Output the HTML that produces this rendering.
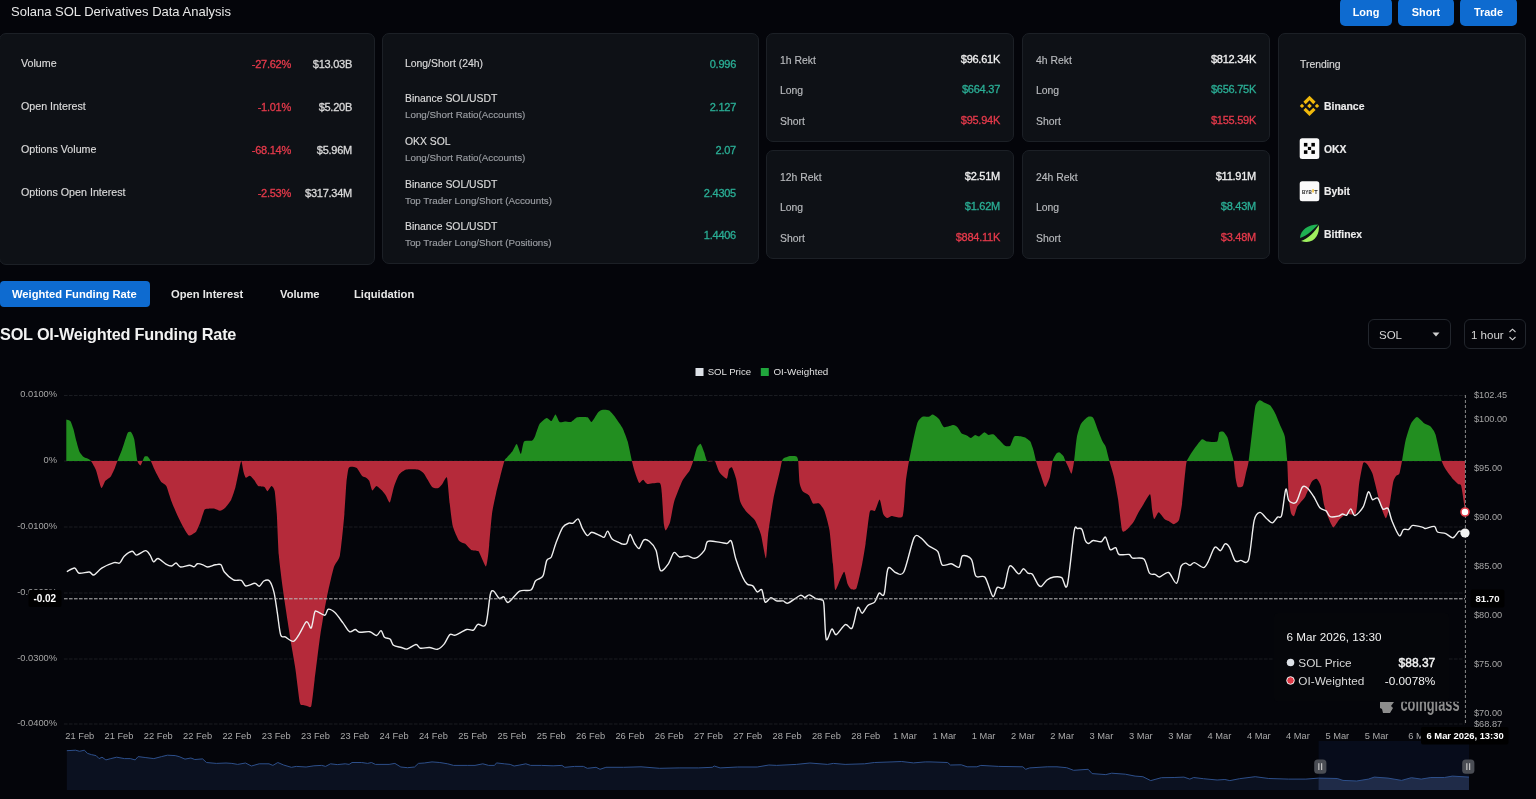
<!DOCTYPE html>
<html><head><meta charset="utf-8">
<style>
html,body{margin:0;padding:0;}
body{width:1536px;height:799px;overflow:hidden;will-change:transform;background:#04050a;font-family:"Liberation Sans",sans-serif;color:#e4e4e4;position:relative;}
.a{position:absolute;white-space:nowrap;}
.card{position:absolute;background:#0e1116;border:1px solid #1c2026;border-radius:7px;box-sizing:border-box;}
.lbl{position:absolute;white-space:nowrap;font-size:10.4px;line-height:10px;color:#dadada;-webkit-text-stroke:0.15px currentColor;}
.tx{font-size:10.7px;}
.num{font-size:11px;letter-spacing:-0.25px;-webkit-text-stroke:0.3px currentColor;}
.r{text-align:right;}
.red{color:#e63a4b;}
.grn{color:#2aae95;}
.sub{color:#9b9ea3;font-size:9.8px;}
.btn{position:absolute;top:-2px;height:27.6px;background:#0e6bd0;border-radius:5px;color:#fff;font-weight:700;font-size:10.9px;line-height:29px;text-align:center;}
.tab{position:absolute;top:294px;font-size:11.2px;font-weight:700;line-height:0;color:#e8e8e8;}
svg text{font-family:"Liberation Sans",sans-serif;}
</style></head><body>
<div class="a" style="left:11px;top:5px;font-size:13px;line-height:13px;color:#e8e8e8;">Solana SOL Derivatives Data Analysis</div>

<div class="btn" style="left:1340px;width:52px;">Long</div>
<div class="btn" style="left:1398px;width:56px;">Short</div>
<div class="btn" style="left:1460px;width:57px;">Trade</div>

<!-- card 1 -->
<div class="card" style="left:-1px;top:33px;width:376px;height:232px;"></div>
<div class="lbl tx" style="left:21px;top:58.3px;">Volume</div>
<div class="lbl tx" style="left:21px;top:101.3px;">Open Interest</div>
<div class="lbl tx" style="left:21px;top:144.3px;">Options Volume</div>
<div class="lbl tx" style="left:21px;top:187.3px;">Options Open Interest</div>
<div class="lbl red r num" style="right:1245px;top:58.7px;">-27.62%</div>
<div class="lbl red r num" style="right:1245px;top:101.7px;">-1.01%</div>
<div class="lbl red r num" style="right:1245px;top:144.7px;">-68.14%</div>
<div class="lbl red r num" style="right:1245px;top:187.7px;">-2.53%</div>
<div class="lbl r num" style="right:1184px;top:58.7px;">$13.03B</div>
<div class="lbl r num" style="right:1184px;top:101.7px;">$5.20B</div>
<div class="lbl r num" style="right:1184px;top:144.7px;">$5.96M</div>
<div class="lbl r num" style="right:1184px;top:187.7px;">$317.34M</div>

<!-- card 2 -->
<div class="card" style="left:382px;top:33px;width:377px;height:231px;"></div>
<div class="lbl" style="left:405px;top:58.5px;">Long/Short (24h)</div>
<div class="lbl" style="left:405px;top:93.5px;">Binance SOL/USDT</div>
<div class="lbl sub" style="left:405px;top:109.5px;">Long/Short Ratio(Accounts)</div>
<div class="lbl" style="left:405px;top:136.5px;">OKX SOL</div>
<div class="lbl sub" style="left:405px;top:152.5px;">Long/Short Ratio(Accounts)</div>
<div class="lbl" style="left:405px;top:179.5px;">Binance SOL/USDT</div>
<div class="lbl sub" style="left:405px;top:195.5px;">Top Trader Long/Short (Accounts)</div>
<div class="lbl" style="left:405px;top:221.5px;">Binance SOL/USDT</div>
<div class="lbl sub" style="left:405px;top:237.5px;">Top Trader Long/Short (Positions)</div>
<div class="lbl grn r num" style="right:800px;top:58.9px;">0.996</div>
<div class="lbl grn r num" style="right:800px;top:101.9px;">2.127</div>
<div class="lbl grn r num" style="right:800px;top:144.9px;">2.07</div>
<div class="lbl grn r num" style="right:800px;top:187.9px;">2.4305</div>
<div class="lbl grn r num" style="right:800px;top:229.9px;">1.4406</div>

<!-- rekt cards -->
<div class="card" style="left:766px;top:33px;width:248px;height:109px;"></div>
<div class="card" style="left:1022px;top:33px;width:248px;height:109px;"></div>
<div class="card" style="left:766px;top:150px;width:248px;height:109px;"></div>
<div class="card" style="left:1022px;top:150px;width:248px;height:109px;"></div>
<div class="lbl" style="left:780px;top:55.5px;color:#b9bbbe;">1h Rekt</div>
<div class="lbl" style="left:780px;top:85.5px;color:#b9bbbe;">Long</div>
<div class="lbl" style="left:780px;top:116.5px;color:#b9bbbe;">Short</div>
<div class="lbl r num" style="right:536px;top:53.9px;color:#f0f0f0;">$96.61K</div>
<div class="lbl grn r num" style="right:536px;top:83.9px;">$664.37</div>
<div class="lbl red r num" style="right:536px;top:114.9px;">$95.94K</div>
<div class="lbl" style="left:1036px;top:55.5px;color:#b9bbbe;">4h Rekt</div>
<div class="lbl" style="left:1036px;top:85.5px;color:#b9bbbe;">Long</div>
<div class="lbl" style="left:1036px;top:116.5px;color:#b9bbbe;">Short</div>
<div class="lbl r num" style="right:280px;top:53.9px;color:#f0f0f0;">$812.34K</div>
<div class="lbl grn r num" style="right:280px;top:83.9px;">$656.75K</div>
<div class="lbl red r num" style="right:280px;top:114.9px;">$155.59K</div>
<div class="lbl" style="left:780px;top:172.5px;color:#b9bbbe;">12h Rekt</div>
<div class="lbl" style="left:780px;top:202.5px;color:#b9bbbe;">Long</div>
<div class="lbl" style="left:780px;top:233.5px;color:#b9bbbe;">Short</div>
<div class="lbl r num" style="right:536px;top:170.9px;color:#f0f0f0;">$2.51M</div>
<div class="lbl grn r num" style="right:536px;top:200.9px;">$1.62M</div>
<div class="lbl red r num" style="right:536px;top:231.9px;">$884.11K</div>
<div class="lbl" style="left:1036px;top:172.5px;color:#b9bbbe;">24h Rekt</div>
<div class="lbl" style="left:1036px;top:202.5px;color:#b9bbbe;">Long</div>
<div class="lbl" style="left:1036px;top:233.5px;color:#b9bbbe;">Short</div>
<div class="lbl r num" style="right:280px;top:170.9px;color:#f0f0f0;">$11.91M</div>
<div class="lbl grn r num" style="right:280px;top:200.9px;">$8.43M</div>
<div class="lbl red r num" style="right:280px;top:231.9px;">$3.48M</div>

<!-- trending -->
<div class="card" style="left:1278px;top:33px;width:248px;height:231px;"></div>
<div class="lbl" style="left:1300px;top:59.5px;color:#d8d8d8;">Trending</div>

<svg class="a" style="left:1296px;top:92px" width="28" height="28" viewBox="0 0 28 28">
<g fill="#f0b90b">
<path d="M13.5,3.7 L19.6,9.8 L17.27,12.13 L13.5,8.36 L9.73,12.13 L7.4,9.8 Z"/>
<path d="M13.5,24.1 L19.6,18 L17.27,15.67 L13.5,19.44 L9.73,15.67 L7.4,18 Z"/>
<path d="M13.5,11.6 L15.8,13.9 L13.5,16.2 L11.2,13.9 Z"/>
<path d="M6,11.7 L8.2,13.9 L6,16.1 L3.8,13.9 Z"/>
<path d="M21,11.7 L23.2,13.9 L21,16.1 L18.8,13.9 Z"/>
</g>
</svg>
<svg class="a" style="left:1296px;top:135px" width="28" height="28" viewBox="0 0 28 28">
<rect x="3.7" y="3.2" width="19.6" height="20.7" rx="2.5" fill="#fafafa"/>
<g fill="#000"><rect x="7.9" y="7.9" width="3.5" height="3.6"/><rect x="15.4" y="7.9" width="3.5" height="3.6"/><rect x="11.9" y="11.9" width="3.2" height="3.1"/><rect x="7.9" y="15.3" width="3.5" height="3.6"/><rect x="15.4" y="15.3" width="3.5" height="3.6"/></g>
</svg>
<svg class="a" style="left:1296px;top:178px" width="28" height="28" viewBox="0 0 28 28">
<rect x="3.7" y="3.2" width="19.6" height="20.1" rx="2.5" fill="#fafafa"/>
<text x="6" y="16" font-size="5.6" font-weight="700" fill="#1a1a1a" textLength="9.8" lengthAdjust="spacingAndGlyphs" font-family="Liberation Sans">BYB</text><text x="18.2" y="16" font-size="5.6" font-weight="700" fill="#1a1a1a" font-family="Liberation Sans">T</text>
<rect x="16.4" y="11.2" width="1.3" height="3.2" fill="#f7b500"/>
</svg>
<svg class="a" style="left:1296px;top:220px" width="28" height="28" viewBox="0 0 28 28">
<path d="M4,18 C4.5,10 12,4.5 22.2,4.6 C17,10 11,16 4,18 Z" fill="#1fb152"/>
<path d="M5,21 C12,18.5 19,12 22.8,5 C24,15 18,25 5,21 Z" fill="#9ef05e"/>
</svg>

<div class="lbl" style="left:1324px;top:101.9px;font-weight:700;color:#ececec;">Binance</div>
<div class="lbl" style="left:1324px;top:144.9px;font-weight:700;color:#ececec;">OKX</div>
<div class="lbl" style="left:1324px;top:186.9px;font-weight:700;color:#ececec;">Bybit</div>
<div class="lbl" style="left:1324px;top:229.9px;font-weight:700;color:#ececec;">Bitfinex</div>

<!-- tabs -->
<div class="a" style="left:0;top:281px;width:150px;height:26px;background:#0e6bd0;border-radius:4px;"></div>
<div class="tab" style="left:12px;color:#fff;">Weighted Funding Rate</div>
<div class="tab" style="left:171px;">Open Interest</div>
<div class="tab" style="left:280px;">Volume</div>
<div class="tab" style="left:354px;">Liquidation</div>

<div class="a" style="left:0;top:326px;font-size:16.3px;line-height:17px;font-weight:700;color:#f2f2f2;letter-spacing:-0.2px;">SOL OI-Weighted Funding Rate</div>

<div class="a" style="left:1368px;top:319px;width:83px;height:30px;border:1px solid #22262d;border-radius:6px;box-sizing:border-box;"></div>
<div class="a" style="left:1379px;top:329px;font-size:11.5px;line-height:12px;color:#d6d6d6;">SOL</div>
<svg class="a" style="left:1432px;top:332px" width="8" height="5"><path d="M0.5,0.5 L7.5,0.5 L4,4.5 Z" fill="#cfcfcf"/></svg>
<div class="a" style="left:1464px;top:319px;width:62px;height:30px;border:1px solid #22262d;border-radius:6px;box-sizing:border-box;"></div>
<div class="a" style="left:1471px;top:329px;font-size:11.5px;line-height:12px;color:#d6d6d6;">1 hour</div>
<svg class="a" style="left:1508px;top:328px" width="9" height="13"><path d="M1.5,4 L4.5,1.2 L7.5,4 M1.5,9 L4.5,11.8 L7.5,9" fill="none" stroke="#cfcfcf" stroke-width="1.1"/></svg>


<svg class="a" style="left:0;top:0" width="1536" height="799" viewBox="0 0 1536 799">
<defs>
<clipPath id="cg"><rect x="0" y="0" width="1536" height="461"/></clipPath>
<clipPath id="cr"><rect x="0" y="461" width="1536" height="400"/></clipPath>
<clipPath id="wm"><rect x="1370" y="701.8" width="100" height="20"/></clipPath>
<linearGradient id="tt" x1="0" y1="0" x2="1" y2="1"><stop offset="0" stop-color="#0a0b11"/><stop offset="1" stop-color="#07080d"/></linearGradient>
</defs>
<!-- legend -->
<rect x="695.5" y="368" width="8" height="8" fill="#dde1e7"/>
<text x="707.7" y="375.3" font-size="9.6" fill="#e0e0e0">SOL Price</text>
<rect x="760.8" y="368" width="8" height="8" fill="#20a63c"/>
<text x="773.5" y="375.3" font-size="9.8" fill="#e0e0e0">OI-Weighted</text>
<!-- grid -->
<g stroke="#1a1c21" stroke-width="1" stroke-dasharray="3.6,1.4">
<line x1="64" y1="395.5" x2="1465" y2="395.5"/>
<line x1="64" y1="461" x2="1465" y2="461"/>
<line x1="64" y1="527" x2="1465" y2="527"/>
<line x1="64" y1="593" x2="1465" y2="593"/>
<line x1="64" y1="659" x2="1465" y2="659"/>
<line x1="64" y1="724" x2="1465" y2="724"/>
</g>
<g font-size="9.3" fill="#a6a6a6" text-anchor="end">
<text x="57" y="397.3">0.0100%</text>
<text x="57" y="463.3">0%</text>
<text x="57" y="529.3">-0.0100%</text>
<text x="57" y="594.8">-0.0200%</text>
<text x="57" y="660.8">-0.0300%</text>
<text x="57" y="726.3">-0.0400%</text>
</g>
<g font-size="9.2" fill="#a6a6a6">
<text x="1474" y="398">$102.45</text>
<text x="1474" y="422">$100.00</text>
<text x="1474" y="471">$95.00</text>
<text x="1474" y="520">$90.00</text>
<text x="1474" y="569">$85.00</text>
<text x="1474" y="618">$80.00</text>
<text x="1474" y="667">$75.00</text>
<text x="1474" y="716">$70.00</text>
<text x="1474" y="727">$68.87</text>
</g>
<!-- funding area -->
<path d="M66.3,461 L66.3,419.5 L66.3,419.5 C66.7,419.6 69.6,420.1 70.3,421.0 C71.0,421.9 72.8,426.9 73.4,429.0 C74.0,431.1 75.9,439.3 76.5,441.6 C77.1,443.9 78.9,450.5 79.6,452.0 C80.3,453.5 82.9,456.3 83.7,457.0 C84.5,457.7 87.2,458.3 87.9,458.7 C88.6,459.1 90.2,459.8 91.0,461.0 C91.8,462.2 95.1,467.8 96.1,470.5 C97.1,473.2 100.4,487.0 101.3,488.0 C102.2,489.0 104.5,481.9 105.4,480.8 C106.3,479.7 109.7,477.9 110.6,476.7 C111.5,475.5 114.0,470.0 114.7,468.4 C115.4,466.8 116.7,462.9 117.4,461.0 C118.1,459.1 121.0,452.2 121.9,449.9 C122.8,447.5 125.4,439.3 126.0,437.5 C126.6,435.7 127.6,432.8 128.1,432.3 C128.6,431.8 130.6,431.6 131.2,432.3 C131.8,433.0 133.7,436.6 134.3,439.5 C134.9,442.4 136.8,458.4 137.4,461.0 C138.0,463.6 140.0,465.4 140.5,465.4 C141.0,465.4 142.2,461.9 142.6,461.0 C143.0,460.1 144.1,456.9 144.6,456.5 C145.1,456.1 147.1,456.1 147.7,456.5 C148.3,456.9 150.2,459.8 150.8,461.0 C151.4,462.2 153.4,467.0 154.0,468.4 C154.6,469.8 156.3,473.2 157.0,474.6 C157.7,476.0 160.3,480.8 161.2,481.9 C162.1,483.0 165.3,484.0 166.3,486.0 C167.3,488.0 170.4,498.5 171.5,501.5 C172.6,504.5 176.5,513.3 177.7,516.0 C178.9,518.7 182.8,526.3 183.9,528.3 C185.0,530.2 187.8,535.2 189.0,535.5 C190.2,535.8 195.2,532.7 196.3,531.4 C197.4,530.1 199.6,524.3 200.4,522.1 C201.2,519.9 203.7,511.0 204.5,509.7 C205.3,508.4 207.6,508.8 208.6,508.7 C209.6,508.6 213.7,508.5 214.8,508.7 C215.9,508.9 219.0,510.9 220.0,510.8 C221.0,510.7 224.1,508.8 225.2,507.7 C226.3,506.6 230.3,501.5 231.3,499.4 C232.3,497.3 234.8,489.7 235.5,487.0 C236.2,484.3 238.0,475.2 238.6,472.6 C239.2,470.0 240.8,461.0 241.3,461.0 C241.8,461.0 243.2,470.9 243.7,472.6 C244.1,474.3 245.2,477.4 245.8,477.7 C246.4,478.0 249.1,475.5 249.9,475.7 C250.7,475.9 253.2,478.8 254.0,479.8 C254.8,480.8 257.2,485.3 258.2,486.0 C259.2,486.7 263.5,486.5 264.4,487.0 C265.3,487.5 266.8,491.3 267.5,491.2 C268.2,491.1 270.9,486.0 271.6,486.0 C272.3,486.0 274.2,488.4 274.7,491.2 C275.2,494.0 276.4,507.5 276.8,513.9 C277.2,520.3 278.2,547.4 278.8,555.0 C279.4,562.6 281.9,582.0 283.0,590.0 C284.1,598.0 288.5,627.1 289.7,635.0 C290.9,642.9 294.4,662.1 295.4,668.9 C296.4,675.7 299.1,699.1 299.9,702.7 C300.7,706.3 302.5,704.7 303.2,705.0 C303.9,705.3 306.2,705.9 307.0,706.0 C307.8,706.1 310.5,708.6 311.3,706.0 C312.1,703.4 313.7,687.1 314.6,680.0 C315.5,672.9 319.1,643.3 320.3,635.0 C321.5,626.7 325.6,603.5 327.0,596.8 C328.4,590.0 332.5,571.7 333.8,567.5 C335.1,563.3 338.9,560.4 340.0,555.0 C341.1,549.6 343.8,521.1 344.4,513.9 C345.0,506.7 346.0,487.4 346.4,482.9 C346.8,478.3 348.0,470.0 348.5,468.4 C349.0,466.8 350.8,466.8 351.6,466.8 C352.4,466.8 355.8,467.1 356.8,468.0 C357.8,468.9 361.0,474.7 361.9,475.7 C362.8,476.7 365.4,477.2 366.1,477.7 C366.8,478.2 368.6,479.5 369.2,480.8 C369.8,482.1 371.6,490.0 372.3,490.5 C373.0,491.0 375.5,486.0 376.4,486.0 C377.3,486.0 380.6,489.2 381.5,490.1 C382.4,491.0 384.9,494.1 385.7,495.3 C386.5,496.5 389.0,503.3 389.8,502.5 C390.6,501.7 393.0,489.8 393.9,487.0 C394.8,484.2 397.9,476.4 399.1,474.6 C400.3,472.9 404.4,470.0 406.3,469.5 C408.2,469.0 415.9,469.1 417.7,469.5 C419.5,469.9 422.5,471.9 423.9,473.6 C425.3,475.4 430.7,485.6 432.1,487.0 C433.5,488.4 437.3,488.3 438.3,488.0 C439.3,487.7 441.5,484.9 442.4,483.9 C443.3,482.9 446.3,475.7 447.0,477.7 C447.7,479.7 449.1,498.6 449.7,503.5 C450.3,508.4 451.9,522.6 452.8,526.3 C453.7,530.0 457.8,539.0 459.0,540.7 C460.2,542.5 464.0,542.9 465.2,543.8 C466.4,544.7 470.1,549.3 471.3,550.0 C472.5,550.7 476.7,550.8 477.5,551.0 C478.3,551.2 478.2,550.5 479.0,552.0 C479.8,553.5 484.9,566.0 485.8,566.4 C486.7,566.8 487.7,558.4 488.0,556.3 C488.3,554.2 488.8,549.2 489.2,545.0 C489.6,540.8 491.3,519.1 492.0,513.9 C492.7,508.7 495.3,496.9 496.1,493.2 C496.9,489.5 499.4,479.9 500.2,476.7 C501.0,473.5 503.8,462.9 504.4,461.0 C505.0,459.1 505.6,459.1 506.4,458.1 C507.2,457.1 511.6,452.3 512.6,450.9 C513.6,449.5 516.0,443.8 516.8,444.1 C517.6,444.4 520.2,454.2 520.9,454.0 C521.6,453.8 522.9,442.9 524.0,441.6 C525.1,440.3 531.1,441.2 532.2,440.6 C533.3,440.0 534.6,437.0 535.3,435.4 C536.0,433.8 538.4,425.8 539.5,424.1 C540.6,422.4 545.5,418.3 546.7,418.0 C547.9,417.7 550.5,421.4 551.4,421.0 C552.3,420.6 554.7,414.3 555.5,414.4 C556.3,414.5 558.7,421.3 559.6,422.0 C560.5,422.7 563.7,421.4 564.8,421.4 C565.9,421.4 569.8,422.4 571.0,422.0 C572.2,421.6 575.6,417.8 577.2,417.3 C578.9,416.8 586.1,416.8 587.5,417.3 C588.9,417.8 590.6,422.5 591.6,422.0 C592.6,421.5 596.8,413.9 597.8,412.7 C598.8,411.5 600.8,410.2 601.9,410.0 C603.0,409.8 607.8,409.7 609.2,410.6 C610.7,411.5 615.1,417.1 616.4,418.9 C617.7,420.7 621.5,425.9 622.6,428.2 C623.7,430.5 626.8,438.3 627.7,441.6 C628.6,444.9 631.2,457.9 631.9,461.0 C632.6,464.1 634.3,470.4 635.0,472.6 C635.7,474.8 638.3,482.2 639.1,482.9 C639.9,483.6 642.4,479.7 643.2,479.8 C644.0,479.9 645.6,483.6 647.3,483.9 C648.9,484.2 658.2,482.0 659.7,482.9 C661.2,483.8 661.4,489.1 661.8,493.2 C662.2,497.3 663.5,520.5 663.9,524.2 C664.3,527.9 665.3,530.6 665.9,530.4 C666.5,530.2 669.3,525.0 670.1,522.1 C670.9,519.2 673.0,505.6 674.2,501.5 C675.4,497.4 680.9,483.9 682.4,480.8 C683.9,477.7 688.6,472.5 689.7,470.5 C690.8,468.5 692.5,463.3 693.2,461.0 C693.9,458.7 696.2,449.5 696.9,447.8 C697.6,446.1 699.9,443.3 700.6,443.7 C701.3,444.1 703.4,450.2 704.1,451.9 C704.8,453.6 706.2,460.1 707.2,461.0 C708.2,461.9 713.6,460.9 714.4,461.0 C715.2,461.1 715.0,461.1 715.5,462.3 C716.0,463.5 718.5,471.0 719.6,472.6 C720.7,474.2 725.9,479.1 726.8,478.8 C727.7,478.5 728.4,470.6 728.9,469.5 C729.4,468.4 731.3,466.5 732.0,467.4 C732.7,468.3 735.3,475.4 736.1,478.8 C736.9,482.2 739.2,498.2 740.2,501.5 C741.2,504.8 744.9,509.9 746.4,511.8 C747.9,513.7 753.2,517.8 754.7,520.1 C756.2,522.4 759.8,530.7 760.9,534.5 C762.0,538.3 765.2,558.2 765.9,558.2 C766.6,558.2 767.4,540.4 768.1,534.5 C768.8,528.6 772.2,505.6 773.3,499.4 C774.4,493.2 778.6,476.4 779.5,472.6 C780.4,468.8 781.5,462.4 782.0,461.0 C782.5,459.6 783.3,458.6 784.1,458.1 C784.9,457.6 789.1,456.3 790.3,456.1 C791.5,455.9 795.7,456.0 796.5,456.5 C797.3,457.0 797.9,458.4 798.2,461.0 C798.5,463.6 799.1,479.9 799.6,482.9 C800.1,485.9 801.8,490.0 802.7,491.2 C803.6,492.4 807.9,494.1 808.9,495.3 C809.9,496.5 812.0,502.7 813.0,503.5 C814.0,504.3 818.1,502.8 819.2,503.5 C820.3,504.2 823.4,508.1 824.4,510.8 C825.4,513.5 828.6,525.1 829.5,530.4 C830.4,535.7 832.3,557.9 832.9,563.8 C833.5,569.7 834.5,588.0 835.2,589.7 C835.9,591.4 838.8,582.5 839.7,580.7 C840.6,578.9 843.4,571.4 844.2,571.7 C845.0,572.0 846.9,582.4 847.6,584.1 C848.3,585.8 850.0,588.6 850.9,589.0 C851.8,589.4 855.5,590.6 856.6,588.1 C857.7,585.6 861.3,568.3 862.2,563.8 C863.1,559.3 864.8,548.7 865.6,543.5 C866.4,538.3 868.9,515.1 869.8,511.8 C870.7,508.5 874.0,512.0 875.0,510.8 C876.0,509.6 878.9,499.1 879.7,499.4 C880.5,499.7 882.4,512.0 883.2,513.9 C884.0,515.8 886.5,517.8 887.3,518.0 C888.1,518.2 890.0,516.1 891.5,515.9 C893.0,515.7 901.4,519.4 902.8,515.9 C904.2,512.4 905.3,486.3 905.9,480.8 C906.5,475.3 908.4,464.5 909.0,461.0 C909.6,457.5 911.3,449.5 912.1,445.7 C912.9,441.9 916.3,425.9 917.3,423.0 C918.3,420.1 921.3,417.4 922.4,416.8 C923.5,416.2 927.6,417.0 928.6,416.8 C929.6,416.6 931.8,414.2 932.8,414.4 C933.8,414.6 937.9,417.6 939.0,418.9 C940.1,420.2 942.7,426.6 944.1,427.2 C945.5,427.8 952.1,425.1 953.4,425.1 C954.7,425.1 956.7,426.4 957.5,427.2 C958.3,428.0 960.8,432.6 961.7,433.4 C962.6,434.2 965.9,434.9 966.8,435.4 C967.7,435.8 970.2,437.9 971.0,437.9 C971.8,437.9 974.3,435.1 975.1,435.0 C975.9,434.9 978.3,436.7 979.2,436.4 C980.1,436.1 983.5,432.4 984.4,432.3 C985.3,432.2 987.6,434.8 988.5,435.0 C989.4,435.2 992.7,433.9 993.7,434.4 C994.7,434.8 997.7,438.4 998.8,439.5 C999.9,440.6 1003.9,445.1 1005.0,445.7 C1006.1,446.3 1009.3,446.6 1010.2,445.7 C1011.1,444.8 1013.2,437.3 1014.3,436.4 C1015.4,435.5 1020.4,436.3 1021.5,436.4 C1022.6,436.5 1024.3,437.0 1025.2,437.5 C1026.1,438.0 1029.5,440.4 1030.3,441.6 C1031.1,442.8 1032.8,448.0 1033.4,449.9 C1034.0,451.8 1035.4,458.5 1036.1,461.0 C1036.8,463.5 1039.7,472.0 1040.6,474.6 C1041.5,477.2 1044.3,486.8 1045.2,487.0 C1046.1,487.2 1049.2,479.3 1049.9,476.7 C1050.6,474.1 1052.0,463.3 1052.6,461.0 C1053.2,458.7 1055.4,454.9 1056.1,454.0 C1056.8,453.1 1058.5,452.1 1059.2,452.3 C1059.9,452.5 1062.8,455.2 1063.4,456.1 C1064.0,457.0 1064.9,459.9 1065.4,461.0 C1065.9,462.1 1067.9,466.1 1068.5,467.4 C1069.1,468.7 1071.0,474.2 1071.6,473.6 C1072.2,473.0 1073.6,464.6 1074.1,461.0 C1074.6,457.4 1076.1,441.2 1076.8,437.5 C1077.5,433.8 1079.8,426.2 1080.9,424.1 C1082.0,422.0 1086.9,417.4 1088.1,416.8 C1089.3,416.2 1092.3,416.4 1093.3,417.9 C1094.3,419.3 1097.5,428.9 1098.4,431.3 C1099.3,433.7 1101.9,440.1 1102.6,441.6 C1103.3,443.2 1105.0,444.9 1105.7,446.8 C1106.4,448.7 1108.6,458.0 1109.4,461.0 C1110.2,464.0 1113.0,472.9 1113.9,476.7 C1114.8,480.5 1117.3,494.0 1118.1,499.4 C1118.9,504.8 1121.3,527.4 1122.2,530.4 C1123.1,533.4 1126.2,530.1 1127.3,529.3 C1128.4,528.5 1132.5,523.6 1133.5,522.1 C1134.5,520.6 1136.7,515.8 1137.7,513.9 C1138.7,512.0 1142.7,505.5 1143.9,503.5 C1145.1,501.5 1149.3,493.7 1150.1,494.3 C1150.9,494.9 1151.7,507.2 1152.1,509.7 C1152.5,512.2 1153.5,518.8 1154.2,519.0 C1154.9,519.2 1157.7,512.2 1158.7,512.2 C1159.7,512.2 1163.5,518.1 1164.5,519.0 C1165.5,519.9 1167.7,520.6 1168.6,521.1 C1169.5,521.6 1172.8,524.3 1173.8,524.2 C1174.8,524.1 1178.2,522.2 1179.0,520.1 C1179.8,518.0 1181.5,508.2 1182.1,503.5 C1182.7,498.8 1184.7,476.9 1185.2,472.6 C1185.7,468.4 1186.0,463.3 1186.8,461.0 C1187.6,458.7 1191.9,452.0 1193.4,449.9 C1194.9,447.8 1200.4,440.3 1201.7,439.5 C1203.0,438.7 1205.3,441.4 1206.8,441.6 C1208.3,441.8 1215.9,442.5 1217.1,441.6 C1218.3,440.7 1218.6,433.3 1219.2,432.3 C1219.8,431.3 1222.5,431.2 1223.3,431.7 C1224.1,432.2 1226.8,435.7 1227.5,437.5 C1228.2,439.3 1230.0,447.5 1230.6,449.9 C1231.2,452.2 1233.2,458.1 1233.7,461.0 C1234.2,463.9 1235.3,476.2 1235.7,478.8 C1236.1,481.4 1237.1,486.3 1237.8,487.0 C1238.5,487.7 1242.2,487.4 1243.0,486.0 C1243.8,484.6 1245.5,475.1 1246.1,472.6 C1246.7,470.1 1248.1,465.1 1248.7,461.0 C1249.3,456.9 1251.5,436.8 1252.2,431.3 C1252.9,425.9 1254.6,409.6 1255.3,406.5 C1256.0,403.4 1258.6,400.7 1259.5,400.3 C1260.4,399.9 1263.5,402.3 1264.6,402.8 C1265.7,403.3 1269.2,404.5 1270.3,405.6 C1271.4,406.7 1274.5,411.8 1275.5,413.9 C1276.5,416.0 1279.7,424.0 1280.6,426.3 C1281.5,428.6 1284.1,433.1 1284.8,436.6 C1285.5,440.1 1286.8,454.8 1287.2,461.0 C1287.6,467.2 1288.5,493.3 1288.9,498.5 C1289.3,503.7 1290.5,511.2 1291.0,513.0 C1291.5,514.8 1293.5,516.7 1294.1,516.1 C1294.7,515.5 1296.6,508.1 1297.2,506.8 C1297.8,505.5 1299.5,503.7 1300.3,502.7 C1301.1,501.7 1304.3,498.6 1305.4,496.5 C1306.5,494.4 1310.5,483.8 1311.6,482.0 C1312.7,480.2 1315.9,478.5 1316.8,478.9 C1317.7,479.3 1320.2,483.6 1320.9,486.2 C1321.6,488.8 1323.3,501.6 1324.0,504.7 C1324.7,507.8 1327.2,514.8 1328.1,517.1 C1329.0,519.4 1332.2,527.2 1333.3,527.4 C1334.4,527.6 1338.2,520.5 1339.5,519.2 C1340.8,517.9 1345.0,514.6 1346.7,514.0 C1348.4,513.4 1354.8,516.0 1356.0,513.0 C1357.2,510.0 1358.4,489.1 1359.1,484.1 C1359.8,479.1 1362.4,465.0 1363.2,463.0 C1364.0,461.0 1366.4,463.4 1367.3,464.5 C1368.2,465.6 1371.5,470.8 1372.5,473.8 C1373.5,476.8 1376.8,490.9 1377.7,494.4 C1378.6,497.9 1381.0,506.5 1381.8,508.9 C1382.6,511.3 1385.2,518.2 1385.9,518.2 C1386.6,518.2 1388.3,512.5 1389.0,508.9 C1389.7,505.3 1392.5,485.3 1393.2,482.0 C1393.9,478.7 1395.7,476.6 1396.3,475.8 C1396.9,475.0 1398.7,475.3 1399.3,473.8 C1399.9,472.3 1401.4,464.3 1402.0,461.0 C1402.6,457.7 1404.6,444.4 1405.5,440.7 C1406.4,437.0 1409.6,426.6 1410.7,424.2 C1411.8,421.8 1415.6,417.1 1416.9,417.0 C1418.2,416.9 1422.8,422.3 1424.1,423.2 C1425.4,424.1 1429.2,425.2 1430.3,426.3 C1431.4,427.4 1434.4,431.0 1435.5,434.5 C1436.6,438.0 1440.7,457.5 1441.7,461.0 C1442.7,464.5 1444.8,467.9 1445.8,469.6 C1446.8,471.3 1450.8,476.4 1452.0,477.9 C1453.2,479.3 1457.3,483.3 1458.2,484.1 C1459.1,484.9 1460.6,483.6 1461.3,486.2 C1462.0,488.8 1464.6,507.6 1465.0,510.0 L1465,461 Z" fill="#228e20" clip-path="url(#cg)"/>
<path d="M66.3,461 L66.3,419.5 L66.3,419.5 C66.7,419.6 69.6,420.1 70.3,421.0 C71.0,421.9 72.8,426.9 73.4,429.0 C74.0,431.1 75.9,439.3 76.5,441.6 C77.1,443.9 78.9,450.5 79.6,452.0 C80.3,453.5 82.9,456.3 83.7,457.0 C84.5,457.7 87.2,458.3 87.9,458.7 C88.6,459.1 90.2,459.8 91.0,461.0 C91.8,462.2 95.1,467.8 96.1,470.5 C97.1,473.2 100.4,487.0 101.3,488.0 C102.2,489.0 104.5,481.9 105.4,480.8 C106.3,479.7 109.7,477.9 110.6,476.7 C111.5,475.5 114.0,470.0 114.7,468.4 C115.4,466.8 116.7,462.9 117.4,461.0 C118.1,459.1 121.0,452.2 121.9,449.9 C122.8,447.5 125.4,439.3 126.0,437.5 C126.6,435.7 127.6,432.8 128.1,432.3 C128.6,431.8 130.6,431.6 131.2,432.3 C131.8,433.0 133.7,436.6 134.3,439.5 C134.9,442.4 136.8,458.4 137.4,461.0 C138.0,463.6 140.0,465.4 140.5,465.4 C141.0,465.4 142.2,461.9 142.6,461.0 C143.0,460.1 144.1,456.9 144.6,456.5 C145.1,456.1 147.1,456.1 147.7,456.5 C148.3,456.9 150.2,459.8 150.8,461.0 C151.4,462.2 153.4,467.0 154.0,468.4 C154.6,469.8 156.3,473.2 157.0,474.6 C157.7,476.0 160.3,480.8 161.2,481.9 C162.1,483.0 165.3,484.0 166.3,486.0 C167.3,488.0 170.4,498.5 171.5,501.5 C172.6,504.5 176.5,513.3 177.7,516.0 C178.9,518.7 182.8,526.3 183.9,528.3 C185.0,530.2 187.8,535.2 189.0,535.5 C190.2,535.8 195.2,532.7 196.3,531.4 C197.4,530.1 199.6,524.3 200.4,522.1 C201.2,519.9 203.7,511.0 204.5,509.7 C205.3,508.4 207.6,508.8 208.6,508.7 C209.6,508.6 213.7,508.5 214.8,508.7 C215.9,508.9 219.0,510.9 220.0,510.8 C221.0,510.7 224.1,508.8 225.2,507.7 C226.3,506.6 230.3,501.5 231.3,499.4 C232.3,497.3 234.8,489.7 235.5,487.0 C236.2,484.3 238.0,475.2 238.6,472.6 C239.2,470.0 240.8,461.0 241.3,461.0 C241.8,461.0 243.2,470.9 243.7,472.6 C244.1,474.3 245.2,477.4 245.8,477.7 C246.4,478.0 249.1,475.5 249.9,475.7 C250.7,475.9 253.2,478.8 254.0,479.8 C254.8,480.8 257.2,485.3 258.2,486.0 C259.2,486.7 263.5,486.5 264.4,487.0 C265.3,487.5 266.8,491.3 267.5,491.2 C268.2,491.1 270.9,486.0 271.6,486.0 C272.3,486.0 274.2,488.4 274.7,491.2 C275.2,494.0 276.4,507.5 276.8,513.9 C277.2,520.3 278.2,547.4 278.8,555.0 C279.4,562.6 281.9,582.0 283.0,590.0 C284.1,598.0 288.5,627.1 289.7,635.0 C290.9,642.9 294.4,662.1 295.4,668.9 C296.4,675.7 299.1,699.1 299.9,702.7 C300.7,706.3 302.5,704.7 303.2,705.0 C303.9,705.3 306.2,705.9 307.0,706.0 C307.8,706.1 310.5,708.6 311.3,706.0 C312.1,703.4 313.7,687.1 314.6,680.0 C315.5,672.9 319.1,643.3 320.3,635.0 C321.5,626.7 325.6,603.5 327.0,596.8 C328.4,590.0 332.5,571.7 333.8,567.5 C335.1,563.3 338.9,560.4 340.0,555.0 C341.1,549.6 343.8,521.1 344.4,513.9 C345.0,506.7 346.0,487.4 346.4,482.9 C346.8,478.3 348.0,470.0 348.5,468.4 C349.0,466.8 350.8,466.8 351.6,466.8 C352.4,466.8 355.8,467.1 356.8,468.0 C357.8,468.9 361.0,474.7 361.9,475.7 C362.8,476.7 365.4,477.2 366.1,477.7 C366.8,478.2 368.6,479.5 369.2,480.8 C369.8,482.1 371.6,490.0 372.3,490.5 C373.0,491.0 375.5,486.0 376.4,486.0 C377.3,486.0 380.6,489.2 381.5,490.1 C382.4,491.0 384.9,494.1 385.7,495.3 C386.5,496.5 389.0,503.3 389.8,502.5 C390.6,501.7 393.0,489.8 393.9,487.0 C394.8,484.2 397.9,476.4 399.1,474.6 C400.3,472.9 404.4,470.0 406.3,469.5 C408.2,469.0 415.9,469.1 417.7,469.5 C419.5,469.9 422.5,471.9 423.9,473.6 C425.3,475.4 430.7,485.6 432.1,487.0 C433.5,488.4 437.3,488.3 438.3,488.0 C439.3,487.7 441.5,484.9 442.4,483.9 C443.3,482.9 446.3,475.7 447.0,477.7 C447.7,479.7 449.1,498.6 449.7,503.5 C450.3,508.4 451.9,522.6 452.8,526.3 C453.7,530.0 457.8,539.0 459.0,540.7 C460.2,542.5 464.0,542.9 465.2,543.8 C466.4,544.7 470.1,549.3 471.3,550.0 C472.5,550.7 476.7,550.8 477.5,551.0 C478.3,551.2 478.2,550.5 479.0,552.0 C479.8,553.5 484.9,566.0 485.8,566.4 C486.7,566.8 487.7,558.4 488.0,556.3 C488.3,554.2 488.8,549.2 489.2,545.0 C489.6,540.8 491.3,519.1 492.0,513.9 C492.7,508.7 495.3,496.9 496.1,493.2 C496.9,489.5 499.4,479.9 500.2,476.7 C501.0,473.5 503.8,462.9 504.4,461.0 C505.0,459.1 505.6,459.1 506.4,458.1 C507.2,457.1 511.6,452.3 512.6,450.9 C513.6,449.5 516.0,443.8 516.8,444.1 C517.6,444.4 520.2,454.2 520.9,454.0 C521.6,453.8 522.9,442.9 524.0,441.6 C525.1,440.3 531.1,441.2 532.2,440.6 C533.3,440.0 534.6,437.0 535.3,435.4 C536.0,433.8 538.4,425.8 539.5,424.1 C540.6,422.4 545.5,418.3 546.7,418.0 C547.9,417.7 550.5,421.4 551.4,421.0 C552.3,420.6 554.7,414.3 555.5,414.4 C556.3,414.5 558.7,421.3 559.6,422.0 C560.5,422.7 563.7,421.4 564.8,421.4 C565.9,421.4 569.8,422.4 571.0,422.0 C572.2,421.6 575.6,417.8 577.2,417.3 C578.9,416.8 586.1,416.8 587.5,417.3 C588.9,417.8 590.6,422.5 591.6,422.0 C592.6,421.5 596.8,413.9 597.8,412.7 C598.8,411.5 600.8,410.2 601.9,410.0 C603.0,409.8 607.8,409.7 609.2,410.6 C610.7,411.5 615.1,417.1 616.4,418.9 C617.7,420.7 621.5,425.9 622.6,428.2 C623.7,430.5 626.8,438.3 627.7,441.6 C628.6,444.9 631.2,457.9 631.9,461.0 C632.6,464.1 634.3,470.4 635.0,472.6 C635.7,474.8 638.3,482.2 639.1,482.9 C639.9,483.6 642.4,479.7 643.2,479.8 C644.0,479.9 645.6,483.6 647.3,483.9 C648.9,484.2 658.2,482.0 659.7,482.9 C661.2,483.8 661.4,489.1 661.8,493.2 C662.2,497.3 663.5,520.5 663.9,524.2 C664.3,527.9 665.3,530.6 665.9,530.4 C666.5,530.2 669.3,525.0 670.1,522.1 C670.9,519.2 673.0,505.6 674.2,501.5 C675.4,497.4 680.9,483.9 682.4,480.8 C683.9,477.7 688.6,472.5 689.7,470.5 C690.8,468.5 692.5,463.3 693.2,461.0 C693.9,458.7 696.2,449.5 696.9,447.8 C697.6,446.1 699.9,443.3 700.6,443.7 C701.3,444.1 703.4,450.2 704.1,451.9 C704.8,453.6 706.2,460.1 707.2,461.0 C708.2,461.9 713.6,460.9 714.4,461.0 C715.2,461.1 715.0,461.1 715.5,462.3 C716.0,463.5 718.5,471.0 719.6,472.6 C720.7,474.2 725.9,479.1 726.8,478.8 C727.7,478.5 728.4,470.6 728.9,469.5 C729.4,468.4 731.3,466.5 732.0,467.4 C732.7,468.3 735.3,475.4 736.1,478.8 C736.9,482.2 739.2,498.2 740.2,501.5 C741.2,504.8 744.9,509.9 746.4,511.8 C747.9,513.7 753.2,517.8 754.7,520.1 C756.2,522.4 759.8,530.7 760.9,534.5 C762.0,538.3 765.2,558.2 765.9,558.2 C766.6,558.2 767.4,540.4 768.1,534.5 C768.8,528.6 772.2,505.6 773.3,499.4 C774.4,493.2 778.6,476.4 779.5,472.6 C780.4,468.8 781.5,462.4 782.0,461.0 C782.5,459.6 783.3,458.6 784.1,458.1 C784.9,457.6 789.1,456.3 790.3,456.1 C791.5,455.9 795.7,456.0 796.5,456.5 C797.3,457.0 797.9,458.4 798.2,461.0 C798.5,463.6 799.1,479.9 799.6,482.9 C800.1,485.9 801.8,490.0 802.7,491.2 C803.6,492.4 807.9,494.1 808.9,495.3 C809.9,496.5 812.0,502.7 813.0,503.5 C814.0,504.3 818.1,502.8 819.2,503.5 C820.3,504.2 823.4,508.1 824.4,510.8 C825.4,513.5 828.6,525.1 829.5,530.4 C830.4,535.7 832.3,557.9 832.9,563.8 C833.5,569.7 834.5,588.0 835.2,589.7 C835.9,591.4 838.8,582.5 839.7,580.7 C840.6,578.9 843.4,571.4 844.2,571.7 C845.0,572.0 846.9,582.4 847.6,584.1 C848.3,585.8 850.0,588.6 850.9,589.0 C851.8,589.4 855.5,590.6 856.6,588.1 C857.7,585.6 861.3,568.3 862.2,563.8 C863.1,559.3 864.8,548.7 865.6,543.5 C866.4,538.3 868.9,515.1 869.8,511.8 C870.7,508.5 874.0,512.0 875.0,510.8 C876.0,509.6 878.9,499.1 879.7,499.4 C880.5,499.7 882.4,512.0 883.2,513.9 C884.0,515.8 886.5,517.8 887.3,518.0 C888.1,518.2 890.0,516.1 891.5,515.9 C893.0,515.7 901.4,519.4 902.8,515.9 C904.2,512.4 905.3,486.3 905.9,480.8 C906.5,475.3 908.4,464.5 909.0,461.0 C909.6,457.5 911.3,449.5 912.1,445.7 C912.9,441.9 916.3,425.9 917.3,423.0 C918.3,420.1 921.3,417.4 922.4,416.8 C923.5,416.2 927.6,417.0 928.6,416.8 C929.6,416.6 931.8,414.2 932.8,414.4 C933.8,414.6 937.9,417.6 939.0,418.9 C940.1,420.2 942.7,426.6 944.1,427.2 C945.5,427.8 952.1,425.1 953.4,425.1 C954.7,425.1 956.7,426.4 957.5,427.2 C958.3,428.0 960.8,432.6 961.7,433.4 C962.6,434.2 965.9,434.9 966.8,435.4 C967.7,435.8 970.2,437.9 971.0,437.9 C971.8,437.9 974.3,435.1 975.1,435.0 C975.9,434.9 978.3,436.7 979.2,436.4 C980.1,436.1 983.5,432.4 984.4,432.3 C985.3,432.2 987.6,434.8 988.5,435.0 C989.4,435.2 992.7,433.9 993.7,434.4 C994.7,434.8 997.7,438.4 998.8,439.5 C999.9,440.6 1003.9,445.1 1005.0,445.7 C1006.1,446.3 1009.3,446.6 1010.2,445.7 C1011.1,444.8 1013.2,437.3 1014.3,436.4 C1015.4,435.5 1020.4,436.3 1021.5,436.4 C1022.6,436.5 1024.3,437.0 1025.2,437.5 C1026.1,438.0 1029.5,440.4 1030.3,441.6 C1031.1,442.8 1032.8,448.0 1033.4,449.9 C1034.0,451.8 1035.4,458.5 1036.1,461.0 C1036.8,463.5 1039.7,472.0 1040.6,474.6 C1041.5,477.2 1044.3,486.8 1045.2,487.0 C1046.1,487.2 1049.2,479.3 1049.9,476.7 C1050.6,474.1 1052.0,463.3 1052.6,461.0 C1053.2,458.7 1055.4,454.9 1056.1,454.0 C1056.8,453.1 1058.5,452.1 1059.2,452.3 C1059.9,452.5 1062.8,455.2 1063.4,456.1 C1064.0,457.0 1064.9,459.9 1065.4,461.0 C1065.9,462.1 1067.9,466.1 1068.5,467.4 C1069.1,468.7 1071.0,474.2 1071.6,473.6 C1072.2,473.0 1073.6,464.6 1074.1,461.0 C1074.6,457.4 1076.1,441.2 1076.8,437.5 C1077.5,433.8 1079.8,426.2 1080.9,424.1 C1082.0,422.0 1086.9,417.4 1088.1,416.8 C1089.3,416.2 1092.3,416.4 1093.3,417.9 C1094.3,419.3 1097.5,428.9 1098.4,431.3 C1099.3,433.7 1101.9,440.1 1102.6,441.6 C1103.3,443.2 1105.0,444.9 1105.7,446.8 C1106.4,448.7 1108.6,458.0 1109.4,461.0 C1110.2,464.0 1113.0,472.9 1113.9,476.7 C1114.8,480.5 1117.3,494.0 1118.1,499.4 C1118.9,504.8 1121.3,527.4 1122.2,530.4 C1123.1,533.4 1126.2,530.1 1127.3,529.3 C1128.4,528.5 1132.5,523.6 1133.5,522.1 C1134.5,520.6 1136.7,515.8 1137.7,513.9 C1138.7,512.0 1142.7,505.5 1143.9,503.5 C1145.1,501.5 1149.3,493.7 1150.1,494.3 C1150.9,494.9 1151.7,507.2 1152.1,509.7 C1152.5,512.2 1153.5,518.8 1154.2,519.0 C1154.9,519.2 1157.7,512.2 1158.7,512.2 C1159.7,512.2 1163.5,518.1 1164.5,519.0 C1165.5,519.9 1167.7,520.6 1168.6,521.1 C1169.5,521.6 1172.8,524.3 1173.8,524.2 C1174.8,524.1 1178.2,522.2 1179.0,520.1 C1179.8,518.0 1181.5,508.2 1182.1,503.5 C1182.7,498.8 1184.7,476.9 1185.2,472.6 C1185.7,468.4 1186.0,463.3 1186.8,461.0 C1187.6,458.7 1191.9,452.0 1193.4,449.9 C1194.9,447.8 1200.4,440.3 1201.7,439.5 C1203.0,438.7 1205.3,441.4 1206.8,441.6 C1208.3,441.8 1215.9,442.5 1217.1,441.6 C1218.3,440.7 1218.6,433.3 1219.2,432.3 C1219.8,431.3 1222.5,431.2 1223.3,431.7 C1224.1,432.2 1226.8,435.7 1227.5,437.5 C1228.2,439.3 1230.0,447.5 1230.6,449.9 C1231.2,452.2 1233.2,458.1 1233.7,461.0 C1234.2,463.9 1235.3,476.2 1235.7,478.8 C1236.1,481.4 1237.1,486.3 1237.8,487.0 C1238.5,487.7 1242.2,487.4 1243.0,486.0 C1243.8,484.6 1245.5,475.1 1246.1,472.6 C1246.7,470.1 1248.1,465.1 1248.7,461.0 C1249.3,456.9 1251.5,436.8 1252.2,431.3 C1252.9,425.9 1254.6,409.6 1255.3,406.5 C1256.0,403.4 1258.6,400.7 1259.5,400.3 C1260.4,399.9 1263.5,402.3 1264.6,402.8 C1265.7,403.3 1269.2,404.5 1270.3,405.6 C1271.4,406.7 1274.5,411.8 1275.5,413.9 C1276.5,416.0 1279.7,424.0 1280.6,426.3 C1281.5,428.6 1284.1,433.1 1284.8,436.6 C1285.5,440.1 1286.8,454.8 1287.2,461.0 C1287.6,467.2 1288.5,493.3 1288.9,498.5 C1289.3,503.7 1290.5,511.2 1291.0,513.0 C1291.5,514.8 1293.5,516.7 1294.1,516.1 C1294.7,515.5 1296.6,508.1 1297.2,506.8 C1297.8,505.5 1299.5,503.7 1300.3,502.7 C1301.1,501.7 1304.3,498.6 1305.4,496.5 C1306.5,494.4 1310.5,483.8 1311.6,482.0 C1312.7,480.2 1315.9,478.5 1316.8,478.9 C1317.7,479.3 1320.2,483.6 1320.9,486.2 C1321.6,488.8 1323.3,501.6 1324.0,504.7 C1324.7,507.8 1327.2,514.8 1328.1,517.1 C1329.0,519.4 1332.2,527.2 1333.3,527.4 C1334.4,527.6 1338.2,520.5 1339.5,519.2 C1340.8,517.9 1345.0,514.6 1346.7,514.0 C1348.4,513.4 1354.8,516.0 1356.0,513.0 C1357.2,510.0 1358.4,489.1 1359.1,484.1 C1359.8,479.1 1362.4,465.0 1363.2,463.0 C1364.0,461.0 1366.4,463.4 1367.3,464.5 C1368.2,465.6 1371.5,470.8 1372.5,473.8 C1373.5,476.8 1376.8,490.9 1377.7,494.4 C1378.6,497.9 1381.0,506.5 1381.8,508.9 C1382.6,511.3 1385.2,518.2 1385.9,518.2 C1386.6,518.2 1388.3,512.5 1389.0,508.9 C1389.7,505.3 1392.5,485.3 1393.2,482.0 C1393.9,478.7 1395.7,476.6 1396.3,475.8 C1396.9,475.0 1398.7,475.3 1399.3,473.8 C1399.9,472.3 1401.4,464.3 1402.0,461.0 C1402.6,457.7 1404.6,444.4 1405.5,440.7 C1406.4,437.0 1409.6,426.6 1410.7,424.2 C1411.8,421.8 1415.6,417.1 1416.9,417.0 C1418.2,416.9 1422.8,422.3 1424.1,423.2 C1425.4,424.1 1429.2,425.2 1430.3,426.3 C1431.4,427.4 1434.4,431.0 1435.5,434.5 C1436.6,438.0 1440.7,457.5 1441.7,461.0 C1442.7,464.5 1444.8,467.9 1445.8,469.6 C1446.8,471.3 1450.8,476.4 1452.0,477.9 C1453.2,479.3 1457.3,483.3 1458.2,484.1 C1459.1,484.9 1460.6,483.6 1461.3,486.2 C1462.0,488.8 1464.6,507.6 1465.0,510.0 L1465,461 Z" fill="#b52a3a" clip-path="url(#cr)"/>
<!-- price -->
<path d="M66.8,571.6 C68.0,571.1 72.8,567.8 74.6,568.0 C76.4,568.2 76.9,572.6 79.1,573.2 C81.3,573.8 87.1,571.7 89.3,572.0 C91.5,572.3 91.9,575.6 93.8,575.0 C95.7,574.4 98.7,570.1 101.7,568.2 C104.7,566.3 111.3,563.4 114.0,562.6 C116.7,561.8 118.2,563.9 119.7,563.0 C121.2,562.1 122.3,558.1 124.2,556.3 C126.1,554.5 130.2,551.5 132.1,551.3 C134.0,551.1 134.6,555.2 136.6,555.1 C138.6,555.0 143.6,550.6 145.6,550.6 C147.6,550.6 148.9,553.4 150.1,555.1 C151.3,556.8 152.3,561.4 153.5,561.9 C154.7,562.4 156.1,558.2 158.0,558.5 C159.9,558.8 163.9,563.0 165.9,564.1 C167.9,565.2 170.0,566.2 171.5,566.0 C173.0,565.8 174.7,562.9 176.0,563.0 C177.3,563.1 178.5,566.7 180.5,567.0 C182.5,567.3 187.5,565.3 189.5,565.3 C191.5,565.3 192.8,567.0 194.0,566.8 C195.2,566.6 196.1,564.0 197.4,563.7 C198.8,563.4 201.5,564.3 203.0,564.8 C204.5,565.3 205.6,567.0 207.5,567.0 C209.4,567.0 213.4,565.1 215.4,564.8 C217.4,564.5 219.7,563.7 221.0,564.8 C222.3,565.9 222.5,569.7 224.4,572.0 C226.3,574.3 230.9,578.6 233.4,579.9 C235.9,581.2 239.4,579.5 241.3,580.4 C243.2,581.3 243.8,585.6 245.8,586.0 C247.8,586.4 252.8,583.3 254.8,583.3 C256.8,583.3 257.9,586.5 259.3,586.2 C260.7,585.9 262.3,581.8 263.8,581.0 C265.3,580.2 268.0,579.3 269.5,581.0 C271.0,582.7 272.8,587.6 274.0,592.3 C275.2,597.0 276.3,606.2 277.3,612.6 C278.3,619.0 279.5,631.4 280.7,635.0 C281.9,638.6 283.3,635.9 285.2,636.9 C287.1,637.9 291.1,641.7 293.1,641.4 C295.1,641.1 296.8,637.9 298.7,635.1 C300.6,632.3 304.1,624.6 305.5,622.7 C306.9,620.8 307.0,621.9 307.9,622.7 C308.8,623.5 310.3,629.4 311.3,627.9 C312.3,626.4 313.8,615.1 314.6,612.6 C315.4,610.1 315.4,611.0 316.9,611.4 C318.4,611.8 323.1,615.6 324.8,615.3 C326.5,615.0 326.7,609.6 328.2,609.2 C329.7,608.8 332.7,610.6 334.9,612.6 C337.1,614.6 340.6,619.8 342.8,622.7 C345.0,625.6 347.6,630.7 349.5,631.7 C351.4,632.7 353.7,629.4 355.2,629.5 C356.7,629.6 357.5,631.9 359.7,632.2 C361.9,632.5 367.3,631.2 369.8,631.7 C372.3,632.2 374.9,635.7 376.6,635.5 C378.3,635.3 379.9,630.3 381.1,630.6 C382.3,630.9 383.1,636.0 384.5,637.3 C385.9,638.6 388.8,637.9 390.1,639.1 C391.5,640.3 391.8,643.9 393.5,645.2 C395.2,646.5 399.4,646.9 401.4,647.5 C403.4,648.1 404.8,649.5 407.0,649.0 C409.2,648.5 414.0,644.6 416.0,644.5 C418.0,644.4 418.5,647.8 420.5,648.2 C422.5,648.7 427.0,647.3 429.5,647.5 C432.0,647.7 435.2,649.8 437.4,649.3 C439.6,648.8 442.2,646.3 444.1,644.1 C446.0,641.9 448.1,636.0 449.8,634.6 C451.5,633.2 452.9,635.9 455.4,635.1 C457.9,634.3 464.0,630.2 466.7,629.5 C469.4,628.8 471.7,630.9 473.4,630.1 C475.1,629.3 476.0,625.2 477.9,624.3 C479.8,623.4 483.9,628.8 485.8,624.3 C487.7,619.8 489.1,599.5 490.3,594.5 C491.5,589.5 492.3,590.6 493.7,591.2 C495.1,591.8 497.8,597.6 499.3,598.4 C500.8,599.2 502.4,596.2 503.8,596.8 C505.2,597.4 505.9,603.2 508.3,602.4 C510.7,601.6 516.2,593.1 519.6,591.2 C523.0,589.3 528.5,591.5 530.9,590.0 C533.3,588.5 534.0,582.7 535.4,581.0 C536.8,579.3 538.8,579.3 540.0,578.4 C541.2,577.5 542.4,577.7 543.4,575.0 C544.4,572.3 545.6,563.1 546.8,560.4 C548.0,557.7 549.9,559.5 551.3,557.0 C552.6,554.5 554.1,548.0 555.8,543.5 C557.5,539.0 560.7,530.3 562.7,527.3 C564.7,524.3 567.4,523.8 568.9,523.2 C570.4,522.6 571.6,523.8 573.0,523.2 C574.4,522.6 576.8,518.2 578.2,519.0 C579.6,519.8 580.9,525.8 582.3,528.3 C583.7,530.8 585.9,535.0 587.3,535.6 C588.7,536.2 589.9,532.3 591.8,532.3 C593.7,532.3 598.0,534.8 599.9,535.5 C601.8,536.2 603.0,537.9 604.2,537.2 C605.4,536.5 606.4,530.8 607.6,531.1 C608.8,531.4 610.4,537.3 612.1,539.0 C613.8,540.7 617.3,541.6 618.8,542.4 C620.3,543.1 621.0,543.8 622.2,544.0 C623.4,544.2 625.5,544.9 626.7,543.5 C627.9,542.1 628.9,534.5 630.1,534.5 C631.3,534.5 633.2,541.4 634.6,543.5 C636.0,545.6 637.8,549.0 639.1,548.5 C640.5,548.0 642.1,541.2 643.6,540.1 C645.1,539.0 647.3,539.8 649.2,541.3 C651.1,542.8 654.3,545.9 656.0,550.3 C657.7,554.7 658.6,568.5 660.5,570.5 C662.4,572.5 666.4,566.5 668.4,563.8 C670.4,561.1 672.3,553.5 674.0,552.5 C675.7,551.5 677.6,556.5 679.6,557.0 C681.6,557.5 685.1,555.7 687.5,555.9 C689.9,556.1 692.9,559.0 695.4,558.2 C697.9,557.4 702.5,552.8 704.4,550.3 C706.3,547.8 705.4,542.5 707.8,541.3 C710.2,540.1 717.3,542.1 720.2,542.4 C723.1,542.7 725.2,543.7 726.9,543.5 C728.6,543.3 730.0,538.9 731.4,541.3 C732.8,543.7 734.2,553.9 735.9,559.3 C737.6,564.7 741.0,573.6 742.7,577.3 C744.4,581.0 745.7,582.8 747.2,584.1 C748.7,585.4 751.3,584.7 752.8,585.9 C754.3,587.1 755.9,591.3 757.3,591.9 C758.6,592.5 760.6,588.2 761.8,589.7 C763.0,591.2 763.8,600.9 765.2,602.1 C766.6,603.3 769.2,597.8 770.9,597.6 C772.6,597.4 774.7,600.4 776.5,600.9 C778.3,601.4 781.5,600.6 783.2,600.9 C784.9,601.2 785.3,604.0 787.9,603.2 C790.5,602.4 797.8,596.1 800.3,595.3 C802.8,594.5 803.4,597.7 804.8,597.6 C806.1,597.5 807.6,594.7 809.3,594.9 C811.0,595.1 814.1,598.0 816.0,598.7 C817.9,599.4 820.5,599.0 821.7,599.8 C822.9,600.6 823.2,598.4 823.9,604.3 C824.6,610.2 825.0,635.5 826.2,639.2 C827.4,642.9 830.3,629.8 831.8,629.1 C833.3,628.4 834.3,635.4 836.3,634.7 C838.3,634.0 842.9,625.6 845.3,624.6 C847.7,623.6 850.2,630.5 852.1,628.0 C854.0,625.5 856.2,609.9 857.7,607.7 C859.2,605.5 860.7,613.6 862.2,613.3 C863.7,613.0 865.9,607.2 867.8,605.5 C869.7,603.8 872.9,604.0 874.6,602.1 C876.3,600.2 877.7,594.3 879.1,593.1 C880.5,591.9 882.8,597.9 884.1,594.2 C885.5,590.5 886.3,571.5 888.1,568.3 C889.9,565.1 893.6,572.3 896.0,572.8 C898.4,573.3 901.2,576.9 903.9,571.7 C906.6,566.5 911.5,543.0 914.0,537.9 C916.5,532.8 918.6,536.7 920.8,537.9 C923.0,539.1 926.1,543.8 928.6,545.8 C931.1,547.8 935.7,548.5 937.7,551.4 C939.7,554.3 940.2,563.0 942.2,564.9 C944.2,566.8 948.7,563.5 951.2,563.8 C953.7,564.1 957.4,568.4 959.1,567.2 C960.8,566.0 960.6,557.1 962.4,555.9 C964.2,554.7 969.4,556.3 971.4,559.3 C973.4,562.3 973.9,573.5 975.9,576.2 C977.9,578.9 982.5,574.3 985.0,577.3 C987.5,580.3 991.0,594.9 992.8,596.4 C994.6,597.9 995.6,588.8 997.3,587.4 C999.0,586.0 1002.2,590.6 1004.1,587.4 C1006.0,584.2 1007.5,568.0 1009.7,566.0 C1011.9,564.0 1016.6,573.5 1018.7,573.9 C1020.8,574.3 1022.0,568.8 1023.4,568.7 C1024.8,568.6 1026.6,572.4 1027.9,573.2 C1029.2,574.0 1030.9,572.6 1032.4,574.3 C1033.9,576.0 1036.7,582.7 1038.0,584.5 C1039.3,586.3 1040.1,587.0 1041.4,586.3 C1042.8,585.6 1045.1,581.4 1047.0,580.0 C1048.9,578.6 1051.6,577.3 1053.8,577.0 C1056.0,576.7 1059.7,576.5 1061.7,577.7 C1063.7,578.9 1065.4,592.0 1067.3,585.1 C1069.2,578.2 1072.6,540.0 1074.1,531.5 C1075.6,523.0 1076.2,528.9 1077.4,528.6 C1078.6,528.3 1080.7,527.5 1081.9,529.3 C1083.1,531.1 1084.3,538.4 1085.3,540.5 C1086.3,542.6 1087.5,543.5 1088.7,543.5 C1089.9,543.5 1091.3,540.8 1093.2,540.5 C1095.1,540.2 1099.2,542.2 1101.1,541.7 C1103.0,541.2 1104.2,536.0 1105.6,537.2 C1106.9,538.4 1108.6,547.9 1110.1,549.5 C1111.6,551.1 1114.4,547.0 1115.7,547.7 C1117.0,548.5 1117.1,553.5 1119.1,554.5 C1121.1,555.5 1127.2,554.0 1129.2,554.5 C1131.2,555.0 1130.4,557.4 1132.6,558.1 C1134.8,558.8 1141.4,556.7 1143.9,559.0 C1146.4,561.3 1147.8,570.9 1149.5,573.2 C1151.2,575.5 1153.6,573.7 1155.1,574.3 C1156.6,574.9 1157.6,577.3 1159.6,577.0 C1161.6,576.7 1166.1,571.6 1168.6,572.5 C1171.1,573.4 1174.6,584.2 1176.5,583.3 C1178.4,582.4 1179.7,569.4 1181.0,566.4 C1182.3,563.4 1184.2,563.3 1185.5,563.1 C1186.8,562.9 1188.7,565.4 1190.0,565.3 C1191.3,565.2 1192.5,562.3 1194.5,562.6 C1196.5,562.9 1201.6,567.7 1203.6,567.6 C1205.6,567.5 1206.4,564.9 1208.1,561.9 C1209.8,558.9 1212.9,549.0 1214.8,547.3 C1216.7,545.6 1219.0,551.2 1220.5,550.7 C1222.0,550.2 1223.7,544.4 1225.0,543.9 C1226.3,543.4 1228.0,544.8 1229.5,547.3 C1231.0,549.8 1233.4,558.8 1235.1,560.8 C1236.8,562.8 1238.7,560.6 1240.7,560.4 C1242.7,560.2 1246.6,565.7 1248.6,559.7 C1250.6,553.7 1252.5,527.4 1254.2,520.3 C1255.9,513.2 1258.1,512.7 1259.9,512.4 C1261.7,512.1 1264.3,516.6 1266.2,518.2 C1268.1,519.8 1270.7,523.1 1272.4,522.9 C1274.1,522.7 1276.1,518.3 1277.5,517.1 C1278.9,515.9 1280.5,519.3 1281.7,515.1 C1282.9,510.9 1284.7,491.5 1285.8,489.3 C1286.9,487.1 1287.4,498.7 1288.9,500.6 C1290.4,502.6 1294.1,504.3 1296.1,502.3 C1298.1,500.3 1300.6,489.3 1302.3,487.2 C1304.0,485.1 1305.8,486.8 1307.5,488.2 C1309.2,489.6 1311.8,493.6 1313.7,496.5 C1315.6,499.4 1318.0,505.6 1319.9,507.8 C1321.8,510.0 1324.6,509.6 1326.1,510.9 C1327.6,512.2 1328.4,515.9 1330.2,516.7 C1332.0,517.5 1336.5,516.5 1338.4,516.1 C1340.3,515.7 1341.4,514.1 1342.6,514.0 C1343.8,513.9 1345.5,515.9 1346.7,515.1 C1347.9,514.3 1349.6,508.8 1350.8,508.9 C1352.0,509.0 1353.1,515.8 1355.0,515.5 C1356.9,515.2 1361.2,510.3 1363.2,506.8 C1365.2,503.3 1367.0,493.0 1368.4,491.9 C1369.8,490.8 1371.1,498.7 1372.5,499.6 C1373.9,500.5 1376.2,496.7 1377.7,498.1 C1379.2,499.5 1381.3,507.3 1382.8,508.9 C1384.3,510.5 1386.6,506.6 1388.0,508.5 C1389.4,510.4 1390.4,517.2 1392.1,521.3 C1393.8,525.4 1397.6,534.5 1399.3,535.7 C1401.0,536.9 1402.1,530.4 1403.5,529.5 C1404.9,528.6 1407.2,530.1 1408.6,529.5 C1410.0,528.9 1410.6,525.7 1412.8,525.4 C1415.0,525.1 1421.2,526.9 1423.1,527.4 C1425.0,527.9 1423.5,528.6 1425.2,528.5 C1426.9,528.4 1432.6,525.9 1434.4,526.4 C1436.2,526.9 1435.8,530.9 1437.5,532.0 C1439.2,533.1 1443.5,532.7 1445.8,533.6 C1448.1,534.5 1451.0,538.2 1453.0,537.8 C1455.0,537.4 1457.4,531.9 1459.2,531.2 C1461.0,530.5 1464.1,532.7 1465.0,533.0" fill="none" stroke="#eeeeee" stroke-width="1.4" stroke-linejoin="round"/>
<!-- tooltip -->
<rect x="1274" y="613" width="175" height="88.5" rx="4" fill="#05060a"/>
<g clip-path="url(#wm)" fill="#8d8d8d">
<text x="1400.5" y="710.8" font-size="20" font-weight="700" textLength="59" lengthAdjust="spacingAndGlyphs">coinglass</text>
<path d="M1380,702 L1394,702 L1391,706 L1393,708 L1390,713 L1383,713 L1382,709 L1380,708 Z"/>
</g>
<text x="1286.6" y="640.5" font-size="11.7" fill="#f2f2f2">6 Mar 2026, 13:30</text>
<circle cx="1290.5" cy="662.5" r="3.8" fill="#dde1e7"/>
<text x="1298.3" y="666.8" font-size="11.8" fill="#d8d8d8">SOL Price</text>
<text x="1435.3" y="666.8" font-size="12" fill="#f2f2f2" stroke="#f2f2f2" stroke-width="0.45" text-anchor="end">$88.37</text>
<circle cx="1290.5" cy="680.5" r="3.8" fill="#e23a47" stroke="#f5f5f5" stroke-width="1"/>
<text x="1298.3" y="684.8" font-size="11.8" fill="#d8d8d8">OI-Weighted</text>
<text x="1435.3" y="684.8" font-size="11.8" fill="#f2f2f2" text-anchor="end">-0.0078%</text>
<!-- crosshair -->
<line x1="64" y1="598.8" x2="1465" y2="598.8" stroke="#bdbdbd" stroke-width="1" stroke-dasharray="3.6,1.4"/>
<line x1="1465.4" y1="395" x2="1465.4" y2="725" stroke="#8a8a8a" stroke-width="1" stroke-dasharray="3,2"/>
<rect x="28.5" y="590" width="33" height="17" rx="2" fill="#000"/>
<text x="56.2" y="601.6" font-size="10" font-weight="700" fill="#ffffff" text-anchor="end">-0.02</text>
<rect x="1470.5" y="589.5" width="34" height="18" rx="2" fill="#000"/>
<text x="1475.5" y="601.8" font-size="9.6" font-weight="700" fill="#f4f4f4">81.70</text>
<circle cx="1465" cy="512" r="4" fill="#ffffff" stroke="#e23a47" stroke-width="1.6"/>
<circle cx="1465" cy="533" r="4.6" fill="#f2f2f2"/>
<!-- dates -->
<g font-size="9.3" fill="#a9a9a9"><text x="79.8" y="738.6" text-anchor="middle">21 Feb</text><text x="119.0" y="738.6" text-anchor="middle">21 Feb</text><text x="158.3" y="738.6" text-anchor="middle">22 Feb</text><text x="197.6" y="738.6" text-anchor="middle">22 Feb</text><text x="236.9" y="738.6" text-anchor="middle">22 Feb</text><text x="276.2" y="738.6" text-anchor="middle">23 Feb</text><text x="315.5" y="738.6" text-anchor="middle">23 Feb</text><text x="354.8" y="738.6" text-anchor="middle">23 Feb</text><text x="394.1" y="738.6" text-anchor="middle">24 Feb</text><text x="433.4" y="738.6" text-anchor="middle">24 Feb</text><text x="472.8" y="738.6" text-anchor="middle">25 Feb</text><text x="512.0" y="738.6" text-anchor="middle">25 Feb</text><text x="551.3" y="738.6" text-anchor="middle">25 Feb</text><text x="590.6" y="738.6" text-anchor="middle">26 Feb</text><text x="629.9" y="738.6" text-anchor="middle">26 Feb</text><text x="669.2" y="738.6" text-anchor="middle">26 Feb</text><text x="708.5" y="738.6" text-anchor="middle">27 Feb</text><text x="747.8" y="738.6" text-anchor="middle">27 Feb</text><text x="787.1" y="738.6" text-anchor="middle">28 Feb</text><text x="826.4" y="738.6" text-anchor="middle">28 Feb</text><text x="865.8" y="738.6" text-anchor="middle">28 Feb</text><text x="905.0" y="738.6" text-anchor="middle">1 Mar</text><text x="944.3" y="738.6" text-anchor="middle">1 Mar</text><text x="983.6" y="738.6" text-anchor="middle">1 Mar</text><text x="1022.9" y="738.6" text-anchor="middle">2 Mar</text><text x="1062.2" y="738.6" text-anchor="middle">2 Mar</text><text x="1101.5" y="738.6" text-anchor="middle">3 Mar</text><text x="1140.8" y="738.6" text-anchor="middle">3 Mar</text><text x="1180.1" y="738.6" text-anchor="middle">3 Mar</text><text x="1219.4" y="738.6" text-anchor="middle">4 Mar</text><text x="1258.8" y="738.6" text-anchor="middle">4 Mar</text><text x="1298.0" y="738.6" text-anchor="middle">4 Mar</text><text x="1337.3" y="738.6" text-anchor="middle">5 Mar</text><text x="1376.6" y="738.6" text-anchor="middle">5 Mar</text><text x="1415.9" y="738.6" text-anchor="middle">6 M</text></g>
<!-- slider -->
<rect x="1318.6" y="741" width="150.4" height="49" fill="#070c1b"/>
<path d="M66.8,750.7 L75.6,750.2 L79.5,751.3 L84.4,750.2 L87.3,753.3 L91.3,754.6 L96.1,755.6 L99.1,758.6 L102.0,757.2 L105.9,759.9 L110.8,758.6 L116.6,757.2 L124.5,758.6 L130.3,758.6 L135.2,759.9 L138.1,756.6 L145.9,757.6 L153.8,758.6 L161.6,756.6 L167.4,755.2 L175.2,755.6 L179.1,756.6 L185.0,759.1 L190.9,758.0 L194.8,759.5 L202.6,758.9 L206.5,762.5 L216.3,763.4 L226.0,763.0 L231.9,763.4 L237.7,764.4 L245.5,763.0 L251.4,766.0 L259.2,763.8 L269.0,763.8 L272.9,765.4 L277.8,762.5 L283.6,765.0 L291.4,767.3 L296.3,766.4 L306.1,767.0 L313.9,765.8 L321.7,765.4 L325.6,766.4 L330.5,763.8 L337.3,764.6 L345.2,763.8 L349.1,764.4 L352.0,762.5 L361.7,762.5 L367.6,763.4 L371.5,762.5 L375.4,764.4 L389.1,764.4 L394.9,763.4 L400.8,767.0 L407.6,767.7 L414.5,767.0 L418.4,763.4 L424.2,763.0 L432.0,761.9 L439.8,762.5 L447.7,763.8 L453.5,765.4 L467.2,765.4 L475.0,765.4 L482.8,763.8 L488.7,765.4 L494.5,765.4 L496.5,762.9 L504.3,763.8 L510.2,764.4 L514.1,766.0 L519.9,765.0 L525.8,763.8 L530.7,765.4 L541.4,765.4 L553.1,765.8 L561.9,765.4 L564.8,767.3 L574.6,766.4 L583.4,766.4 L587.3,768.3 L596.1,767.3 L600.0,769.3 L605.9,767.3 L623.4,767.3 L641.0,766.8 L659.5,768.3 L679.1,767.9 L698.6,767.9 L712.3,767.3 L714.2,766.0 L720.1,767.9 L737.7,767.0 L757.2,767.0 L768.9,765.0 L776.7,765.4 L796.3,764.4 L809.9,763.0 L827.5,764.4 L833.4,763.4 L845.1,764.4 L864.6,763.8 L874.4,762.5 L892.0,761.9 L901.7,761.5 L913.4,762.9 L925.2,761.9 L930.0,761.9 L947.6,762.5 L950.5,765.0 L961.3,764.8 L967.1,766.8 L976.9,766.8 L980.8,765.4 L998.4,766.4 L1022.8,766.8 L1025.7,769.3 L1029.6,767.9 L1047.2,766.8 L1057.0,766.8 L1066.7,767.7 L1073.6,770.3 L1088.2,769.3 L1092.1,773.6 L1105.8,774.6 L1111.6,773.2 L1125.3,774.2 L1135.1,776.1 L1142.9,776.7 L1150.7,780.6 L1161.4,777.7 L1174.1,777.5 L1183.9,777.1 L1189.8,779.1 L1193.7,777.5 L1203.4,778.7 L1217.1,780.0 L1224.9,779.5 L1229.8,780.6 L1239.5,778.7 L1255.2,776.7 L1268.8,778.5 L1288.4,779.1 L1305.9,779.1 L1318.6,778.1 L1337.2,778.5 L1343.0,780.4 L1356.7,781.0 L1368.4,779.1 L1374.3,777.1 L1388.0,778.1 L1401.6,780.4 L1411.4,777.7 L1421.2,779.1 L1430.9,777.5 L1444.6,777.5 L1452.3,776.1 L1469.0,777.1 L1469,790 L66.8,790 Z" fill="#0b1120"/>
<clipPath id="sel"><rect x="1318.6" y="700" width="150.4" height="100"/></clipPath>
<path d="M66.8,750.7 L75.6,750.2 L79.5,751.3 L84.4,750.2 L87.3,753.3 L91.3,754.6 L96.1,755.6 L99.1,758.6 L102.0,757.2 L105.9,759.9 L110.8,758.6 L116.6,757.2 L124.5,758.6 L130.3,758.6 L135.2,759.9 L138.1,756.6 L145.9,757.6 L153.8,758.6 L161.6,756.6 L167.4,755.2 L175.2,755.6 L179.1,756.6 L185.0,759.1 L190.9,758.0 L194.8,759.5 L202.6,758.9 L206.5,762.5 L216.3,763.4 L226.0,763.0 L231.9,763.4 L237.7,764.4 L245.5,763.0 L251.4,766.0 L259.2,763.8 L269.0,763.8 L272.9,765.4 L277.8,762.5 L283.6,765.0 L291.4,767.3 L296.3,766.4 L306.1,767.0 L313.9,765.8 L321.7,765.4 L325.6,766.4 L330.5,763.8 L337.3,764.6 L345.2,763.8 L349.1,764.4 L352.0,762.5 L361.7,762.5 L367.6,763.4 L371.5,762.5 L375.4,764.4 L389.1,764.4 L394.9,763.4 L400.8,767.0 L407.6,767.7 L414.5,767.0 L418.4,763.4 L424.2,763.0 L432.0,761.9 L439.8,762.5 L447.7,763.8 L453.5,765.4 L467.2,765.4 L475.0,765.4 L482.8,763.8 L488.7,765.4 L494.5,765.4 L496.5,762.9 L504.3,763.8 L510.2,764.4 L514.1,766.0 L519.9,765.0 L525.8,763.8 L530.7,765.4 L541.4,765.4 L553.1,765.8 L561.9,765.4 L564.8,767.3 L574.6,766.4 L583.4,766.4 L587.3,768.3 L596.1,767.3 L600.0,769.3 L605.9,767.3 L623.4,767.3 L641.0,766.8 L659.5,768.3 L679.1,767.9 L698.6,767.9 L712.3,767.3 L714.2,766.0 L720.1,767.9 L737.7,767.0 L757.2,767.0 L768.9,765.0 L776.7,765.4 L796.3,764.4 L809.9,763.0 L827.5,764.4 L833.4,763.4 L845.1,764.4 L864.6,763.8 L874.4,762.5 L892.0,761.9 L901.7,761.5 L913.4,762.9 L925.2,761.9 L930.0,761.9 L947.6,762.5 L950.5,765.0 L961.3,764.8 L967.1,766.8 L976.9,766.8 L980.8,765.4 L998.4,766.4 L1022.8,766.8 L1025.7,769.3 L1029.6,767.9 L1047.2,766.8 L1057.0,766.8 L1066.7,767.7 L1073.6,770.3 L1088.2,769.3 L1092.1,773.6 L1105.8,774.6 L1111.6,773.2 L1125.3,774.2 L1135.1,776.1 L1142.9,776.7 L1150.7,780.6 L1161.4,777.7 L1174.1,777.5 L1183.9,777.1 L1189.8,779.1 L1193.7,777.5 L1203.4,778.7 L1217.1,780.0 L1224.9,779.5 L1229.8,780.6 L1239.5,778.7 L1255.2,776.7 L1268.8,778.5 L1288.4,779.1 L1305.9,779.1 L1318.6,778.1 L1337.2,778.5 L1343.0,780.4 L1356.7,781.0 L1368.4,779.1 L1374.3,777.1 L1388.0,778.1 L1401.6,780.4 L1411.4,777.7 L1421.2,779.1 L1430.9,777.5 L1444.6,777.5 L1452.3,776.1 L1469.0,777.1 L1469,790 L66.8,790 Z" fill="#1f2b48" clip-path="url(#sel)"/>
<path d="M66.8,750.7 L75.6,750.2 L79.5,751.3 L84.4,750.2 L87.3,753.3 L91.3,754.6 L96.1,755.6 L99.1,758.6 L102.0,757.2 L105.9,759.9 L110.8,758.6 L116.6,757.2 L124.5,758.6 L130.3,758.6 L135.2,759.9 L138.1,756.6 L145.9,757.6 L153.8,758.6 L161.6,756.6 L167.4,755.2 L175.2,755.6 L179.1,756.6 L185.0,759.1 L190.9,758.0 L194.8,759.5 L202.6,758.9 L206.5,762.5 L216.3,763.4 L226.0,763.0 L231.9,763.4 L237.7,764.4 L245.5,763.0 L251.4,766.0 L259.2,763.8 L269.0,763.8 L272.9,765.4 L277.8,762.5 L283.6,765.0 L291.4,767.3 L296.3,766.4 L306.1,767.0 L313.9,765.8 L321.7,765.4 L325.6,766.4 L330.5,763.8 L337.3,764.6 L345.2,763.8 L349.1,764.4 L352.0,762.5 L361.7,762.5 L367.6,763.4 L371.5,762.5 L375.4,764.4 L389.1,764.4 L394.9,763.4 L400.8,767.0 L407.6,767.7 L414.5,767.0 L418.4,763.4 L424.2,763.0 L432.0,761.9 L439.8,762.5 L447.7,763.8 L453.5,765.4 L467.2,765.4 L475.0,765.4 L482.8,763.8 L488.7,765.4 L494.5,765.4 L496.5,762.9 L504.3,763.8 L510.2,764.4 L514.1,766.0 L519.9,765.0 L525.8,763.8 L530.7,765.4 L541.4,765.4 L553.1,765.8 L561.9,765.4 L564.8,767.3 L574.6,766.4 L583.4,766.4 L587.3,768.3 L596.1,767.3 L600.0,769.3 L605.9,767.3 L623.4,767.3 L641.0,766.8 L659.5,768.3 L679.1,767.9 L698.6,767.9 L712.3,767.3 L714.2,766.0 L720.1,767.9 L737.7,767.0 L757.2,767.0 L768.9,765.0 L776.7,765.4 L796.3,764.4 L809.9,763.0 L827.5,764.4 L833.4,763.4 L845.1,764.4 L864.6,763.8 L874.4,762.5 L892.0,761.9 L901.7,761.5 L913.4,762.9 L925.2,761.9 L930.0,761.9 L947.6,762.5 L950.5,765.0 L961.3,764.8 L967.1,766.8 L976.9,766.8 L980.8,765.4 L998.4,766.4 L1022.8,766.8 L1025.7,769.3 L1029.6,767.9 L1047.2,766.8 L1057.0,766.8 L1066.7,767.7 L1073.6,770.3 L1088.2,769.3 L1092.1,773.6 L1105.8,774.6 L1111.6,773.2 L1125.3,774.2 L1135.1,776.1 L1142.9,776.7 L1150.7,780.6 L1161.4,777.7 L1174.1,777.5 L1183.9,777.1 L1189.8,779.1 L1193.7,777.5 L1203.4,778.7 L1217.1,780.0 L1224.9,779.5 L1229.8,780.6 L1239.5,778.7 L1255.2,776.7 L1268.8,778.5 L1288.4,779.1 L1305.9,779.1 L1318.6,778.1 L1337.2,778.5 L1343.0,780.4 L1356.7,781.0 L1368.4,779.1 L1374.3,777.1 L1388.0,778.1 L1401.6,780.4 L1411.4,777.7 L1421.2,779.1 L1430.9,777.5 L1444.6,777.5 L1452.3,776.1 L1469.0,777.1" fill="none" stroke="#2d4f8a" stroke-width="1"/>
<g>
<rect x="1314.2" y="759.5" width="12.2" height="14.2" rx="3.5" fill="#4a4d54"/>
<rect x="1318.3" y="763.2" width="1.1" height="6.8" fill="#cfcfcf"/><rect x="1321.1" y="763.2" width="1.1" height="6.8" fill="#cfcfcf"/>
<rect x="1462.2" y="759.5" width="12.2" height="14.2" rx="3.5" fill="#4a4d54"/>
<rect x="1466.3" y="763.2" width="1.1" height="6.8" fill="#cfcfcf"/><rect x="1469.1" y="763.2" width="1.1" height="6.8" fill="#cfcfcf"/>
</g>
<rect x="1421" y="727" width="87.5" height="17.5" rx="2" fill="#000"/>
<text x="1426.5" y="739" font-size="9.4" font-weight="700" fill="#ffffff">6 Mar 2026, 13:30</text>
</svg>

</body></html>
